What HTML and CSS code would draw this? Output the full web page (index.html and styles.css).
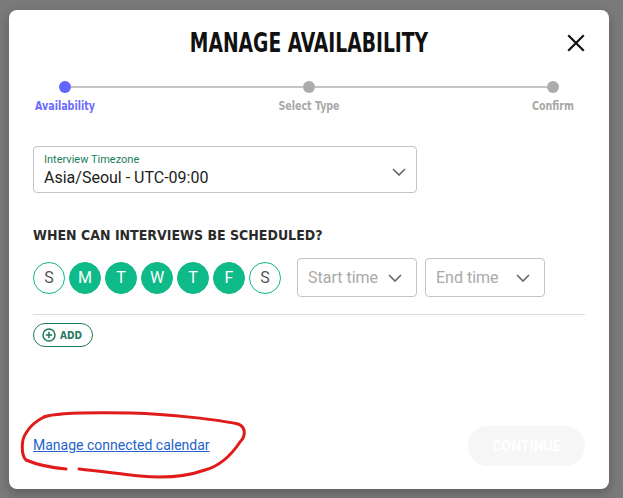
FILE: index.html
```html
<!DOCTYPE html>
<html>
<head>
<meta charset="utf-8">
<link rel="stylesheet" href="styles.css">
</head>
<body>
<div class="dialog">
  <div class="header">
    <h1 class="title">MANAGE AVAILABILITY</h1>
    <button class="close" aria-label="Close">
      <svg width="18" height="18" viewBox="0 0 18 18"><path d="M2 2L16 16M16 2L2 16" stroke="#111" stroke-width="2.2" stroke-linecap="square"/></svg>
    </button>
  </div>

  <div class="stepper">
    <div class="track">
      <span class="dot active"></span>
      <span class="line"></span>
      <span class="dot"></span>
      <span class="line"></span>
      <span class="dot"></span>
    </div>
    <div class="labels">
      <span class="step-label active">Availability</span>
      <span class="step-label">Select Type</span>
      <span class="step-label">Confirm</span>
    </div>
  </div>

  <div class="tz-select">
    <div class="tz-text">
      <span class="tz-label">Interview Timezone</span>
      <span class="tz-value">Asia/Seoul - UTC-09:00</span>
    </div>
    <svg class="chev" width="14" height="8" viewBox="0 0 14 8"><path d="M1 1L7 7L13 1" fill="none" stroke="#666" stroke-width="1.6"/></svg>
  </div>

  <h2 class="section">WHEN CAN INTERVIEWS BE SCHEDULED?</h2>

  <div class="schedule-row">
    <div class="days">
      <span class="day">S</span>
      <span class="day on">M</span>
      <span class="day on">T</span>
      <span class="day on">W</span>
      <span class="day on">T</span>
      <span class="day on">F</span>
      <span class="day">S</span>
    </div>
    <div class="time-select">
      <span>Start time</span>
      <svg width="14" height="8" viewBox="0 0 14 8"><path d="M1 1L7 7L13 1" fill="none" stroke="#666" stroke-width="1.6"/></svg>
    </div>
    <div class="time-select">
      <span>End time</span>
      <svg width="14" height="8" viewBox="0 0 14 8"><path d="M1 1L7 7L13 1" fill="none" stroke="#666" stroke-width="1.6"/></svg>
    </div>
  </div>

  <div class="divider"></div>

  <button class="add">
    <svg width="14" height="14" viewBox="0 0 14 14"><circle cx="7" cy="7" r="6" fill="none" stroke="#1f7a5c" stroke-width="1.5"/><path d="M7 3.8V10.2M3.8 7H10.2" stroke="#1f7a5c" stroke-width="1.5"/></svg>
    <span>ADD</span>
  </button>

  <div class="spacer"></div>

  <div class="footer">
    <a class="cal-link" href="#">Manage connected calendar</a>
    <button class="continue">CONTINUE</button>
    <svg class="scribble" width="232" height="72" viewBox="0 0 232 72">
      <path d="M24 7 C 34 3, 60 2, 111 3 C 150 4, 200 10, 218 14 C 226 17, 226 26, 220 32 C 212 44, 200 56, 185 60 C 165 67, 140 68, 120 66 C 100 64, 80 61, 59 59" fill="none" stroke="#e11b1b" stroke-width="3" stroke-linecap="round"/>
      <path d="M46 59 C 35 58, 20 56, 6 50 C 1 45, 1 30, 6 23 C 10 16, 16 11, 24 7" fill="none" stroke="#e11b1b" stroke-width="3" stroke-linecap="round"/>
    </svg>
  </div>
</div>
</body>
</html>
```

FILE: styles.css
```css
* { box-sizing: border-box; }
html, body { margin: 0; height: 100%; }
body {
  background: #7a7a7a;
  padding: 10px 14px 9px 9px;
  font-family: Roboto, "Liberation Sans", sans-serif;
}
.dialog {
  width: 600px;
  height: 479px;
  background: #fff;
  border-radius: 8px;
  box-shadow: 0 4px 12px rgba(0,0,0,0.25);
  padding: 20px 24px 23px 24px;
  display: flex;
  flex-direction: column;
}
.header {
  position: relative;
  display: flex;
  justify-content: center;
  align-items: center;
  height: 26px;
}
.title {
  margin: 0;
  font-family: "DejaVu Sans Condensed", sans-serif;
  font-weight: 700;
  font-size: 26px;
  color: #111;
  white-space: nowrap;
  transform: scaleX(0.8);
}
.close {
  position: absolute;
  right: 0;
  top: 4px;
  border: 0;
  background: none;
  padding: 0;
  width: 18px;
  height: 18px;
}
.stepper { margin-top: 25px; }
.track {
  display: flex;
  align-items: center;
  padding: 0 26px;
}
.dot {
  width: 12px;
  height: 12px;
  border-radius: 50%;
  background: #acacac;
  flex: none;
}
.dot.active { background: #6464ff; }
.line {
  flex: 1;
  height: 2px;
  background: #c4c4c4;
}
.labels {
  display: flex;
  justify-content: space-between;
  margin-top: 6px;
}
.step-label {
  width: 64px;
  white-space: nowrap;
  display: flex;
  justify-content: center;
  font-family: "DejaVu Sans Condensed", sans-serif;
  font-size: 12px;
  font-weight: 700;
  color: #a8a8a8;
  line-height: 14px;
  transform: scaleX(0.88);
}
.step-label.active { color: #6b6bff; }
.tz-select {
  margin-top: 33px;
  width: 384px;
  height: 47px;
  border: 1px solid #c4c4c4;
  border-radius: 4px;
  display: flex;
  align-items: center;
  justify-content: space-between;
  padding: 0 10px 0 10px;
}
.tz-text { display: flex; flex-direction: column; padding-top: 3px; }
.tz-label { font-size: 11px; color: #1a8060; line-height: 13px; }
.tz-value { font-size: 16px; color: #1d1d1d; line-height: 24px; }
.tz-select .chev { margin-top: 4px; }
.section {
  margin: 34px 0 0 0;
  font-family: "DejaVu Sans Condensed", sans-serif;
  font-size: 14px;
  font-weight: 700;
  color: #2a2a2a;
  line-height: 16px;
}
.schedule-row {
  margin-top: 15px;
  display: flex;
  align-items: center;
  gap: 8px;
}
.days { display: flex; gap: 4px; margin-right: 8px; }
.day {
  width: 32px;
  height: 32px;
  border-radius: 50%;
  border: 1px solid #12b886;
  display: flex;
  align-items: center;
  justify-content: center;
  font-size: 16px;
  color: #555;
}
.day.on { background: #0fba89; color: #fff; }
.time-select {
  width: 120px;
  height: 39px;
  border: 1px solid #c4c4c4;
  border-radius: 4px;
  display: flex;
  align-items: center;
  justify-content: space-between;
  padding: 0 14px 0 10px;
  font-size: 16px;
  color: #a9a9a9;
}
.divider {
  margin-top: 17px;
  height: 1px;
  background: #dcdcdc;
}
.add {
  margin-top: 8px;
  align-self: flex-start;
  width: 60px;
  height: 24px;
  border: 1px solid #1f7a5c;
  border-radius: 12px;
  background: #fff;
  display: flex;
  align-items: center;
  gap: 4px;
  padding: 0 0 0 8px;
  font-family: "DejaVu Sans Condensed", sans-serif;
  font-size: 10px;
  font-weight: 700;
  color: #1f7a5c;
}
.spacer { flex: 1; }
.footer {
  position: relative;
  display: flex;
  align-items: center;
  justify-content: space-between;
  height: 40px;
}
.cal-link {
  font-size: 14px;
  color: #2563c9;
  text-decoration: underline;
  margin-top: -2px;
}
.continue {
  width: 117px;
  height: 40px;
  border: 0;
  border-radius: 20px;
  background: #f6f6f6;
  color: #fff;
  font-family: Roboto, sans-serif;
  font-weight: 700;
  font-size: 14px;
}
.scribble {
  position: absolute;
  left: -13px;
  top: -16px;
  pointer-events: none;
}
```
